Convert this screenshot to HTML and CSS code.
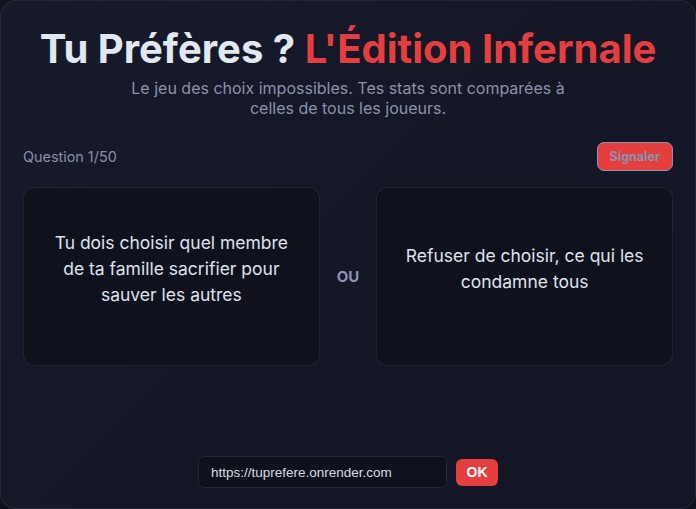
FILE: index.html
```html
<!DOCTYPE html>
<html lang="fr">
<head>
<meta charset="utf-8">
<title>Tu Préfères ? L'Édition Infernale</title>
<link rel="stylesheet" href="styles.css">
</head>
<body>
<main class="app">
  <header class="hero">
    <h1 class="title">Tu Préfères ? <span class="accent">L'Édition Infernale</span></h1>
    <p class="subtitle">Le jeu des choix impossibles. Tes stats sont comparées à celles de tous les joueurs.</p>
  </header>
  <section class="game">
    <div class="toolbar">
      <span class="counter">Question 1/50</span>
      <button class="report">Signaler</button>
    </div>
    <div class="choices">
      <button class="choice">Tu dois choisir quel membre de ta famille sacrifier pour sauver les autres</button>
      <span class="or">OU</span>
      <button class="choice">Refuser de choisir, ce qui les condamne tous</button>
    </div>
  </section>
  <form class="url-form">
    <input class="url" type="text" value="https://tuprefere.onrender.com">
    <button class="ok" type="button">OK</button>
  </form>
</main>
</body>
</html>
```
FILE: styles.css
```css
* { box-sizing: border-box; }
html, body { margin: 0; height: 100%; }
body {
  background: #10121d;
  font-family: Inter, "Noto Sans", sans-serif;
  overflow: hidden;
}
.app {
  height: 509px;
  background: linear-gradient(135deg, #171a2b 0%, #141726 50%, #131626 100%);
  border: 1px solid rgba(255,255,255,0.07);
  border-radius: 16px;
  padding: 24px 22px 0;
  display: flex;
  flex-direction: column;
}
.hero { text-align: center; }
.title {
  margin: 0;
  font-size: 40px;
  line-height: 48px;
  font-weight: 700;
  color: #e2e8f0;
}
.accent { color: #e53e3e; }
.subtitle {
  margin: 5px auto 0;
  max-width: 460px;
  font-size: 16px;
  line-height: 20px;
  color: #8a93ab;
}
.game { margin-top: 24px; }
.toolbar {
  display: flex;
  justify-content: space-between;
  align-items: center;
}
.counter { font-size: 14.4px; color: #8790a8; }
.report {
  background: #e53e3e;
  color: #8a94b0;
  border: 1px solid #8a94b0;
  border-radius: 7px;
  font-family: Inter, sans-serif;
  font-size: 12.5px;
  font-weight: 700;
  padding: 0 12px;
  height: 29px;
}
.choices {
  margin-top: 16px;
  display: grid;
  grid-template-columns: 1fr auto 1fr;
  gap: 17px;
  align-items: center;
}
.choice {
  height: 179px;
  background: #0f121d;
  border: 1px solid rgba(255,255,255,0.08);
  border-radius: 12px;
  color: #dfe3ee;
  font-family: Inter, sans-serif;
  font-size: 17.5px;
  line-height: 26px;
  padding: 0 24px 16px;
  text-align: center;
}
.or { color: #8a94b0; font-size: 15px; font-weight: 700; }
.url-form {
  margin-top: 90px;
  display: flex;
  justify-content: center;
  align-items: center;
  gap: 9px;
}
.url {
  width: 249px;
  height: 32px;
  background: #0e111b;
  border: 1px solid #232736;
  border-radius: 6px;
  color: #d8dce6;
  font-family: "Liberation Sans", Arial, sans-serif;
  font-size: 13.5px;
  padding: 0 12px;
}
.ok {
  height: 27px;
  width: 42px;
  background: #e53e3e;
  border: 0;
  border-radius: 6px;
  color: #ffffff;
  font-family: "Liberation Sans", Arial, sans-serif;
  font-size: 14px;
  font-weight: 700;
  padding: 0;
}
```
